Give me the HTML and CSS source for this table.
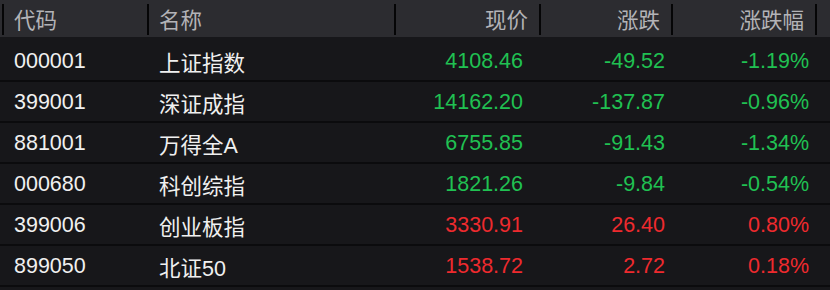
FILE: index.html
```html
<!DOCTYPE html>
<html lang="zh-CN">
<head>
<meta charset="utf-8">
<title>指数行情</title>
<link rel="stylesheet" href="styles.css">
</head>
<body>
<div class="board">
  <div class="head">
    <span class="sep"></span>
    <span class="hcell">代码</span>
    <span class="sep"></span>
    <span class="hcell">名称</span>
    <span class="sep"></span>
    <span class="hcell num">现价</span>
    <span class="sep"></span>
    <span class="hcell num">涨跌</span>
    <span class="sep"></span>
    <span class="hcell num">涨跌幅</span>
    <span class="sep"></span>
  </div>
  <div class="rows">
    <div class="row">
      <span class="code">000001</span><span class="name">上证指数</span>
      <span class="price down">4108.46</span><span class="chg down">-49.52</span><span class="pct down">-1.19%</span>
    </div>
    <div class="row">
      <span class="code">399001</span><span class="name">深证成指</span>
      <span class="price down">14162.20</span><span class="chg down">-137.87</span><span class="pct down">-0.96%</span>
    </div>
    <div class="row">
      <span class="code">881001</span><span class="name">万得全A</span>
      <span class="price down">6755.85</span><span class="chg down">-91.43</span><span class="pct down">-1.34%</span>
    </div>
    <div class="row">
      <span class="code">000680</span><span class="name">科创综指</span>
      <span class="price down">1821.26</span><span class="chg down">-9.84</span><span class="pct down">-0.54%</span>
    </div>
    <div class="row">
      <span class="code">399006</span><span class="name">创业板指</span>
      <span class="price up">3330.91</span><span class="chg up">26.40</span><span class="pct up">0.80%</span>
    </div>
    <div class="row">
      <span class="code">899050</span><span class="name">北证50</span>
      <span class="price up">1538.72</span><span class="chg up">2.72</span><span class="pct up">0.18%</span>
    </div>
  </div>
</div>
</body>
</html>
```

FILE: styles.css
```css
html, body {
  margin: 0;
  padding: 0;
  background: #17171a;
}
body {
  width: 830px;
  height: 290px;
  overflow: hidden;
  font-family: "Liberation Sans", "Noto Sans CJK SC", sans-serif;
  font-size: 21.5px;
}
.head {
  height: 37px;
  background: #2c2c30;
  padding-left: 2px;
  display: grid;
  grid-template-columns: 2px 143px 2px 245px 2px 143px 2px 130px 2px 142px 2px;
  align-items: center;
  color: #b3b3b7;
}
.sep {
  height: 31px;
  background: #050506;
  align-self: center;
  margin-top: 1px;
}
.hcell {
  padding-left: 10px;
  white-space: nowrap;
}
.hcell.num {
  text-align: right;
  padding-left: 0;
  padding-right: 11px;
}
.rows {
  padding-top: 4px;
}
.row {
  height: 37px;
  padding-top: 2px;
  border-bottom: 2px solid #0b0b0d;
  padding-left: 4px;
  display: grid;
  grid-template-columns: 145px 247px 145px 132px 144px;
  align-items: center;
  color: #f0f0f0;
  white-space: nowrap;
}
.code, .name {
  padding-left: 10px;
}
.price, .chg, .pct {
  text-align: right;
}
.price { padding-right: 18px; }
.chg, .pct { padding-right: 8px; }
.down { color: #20c152; }
.up { color: #ee2a2e; }
```
